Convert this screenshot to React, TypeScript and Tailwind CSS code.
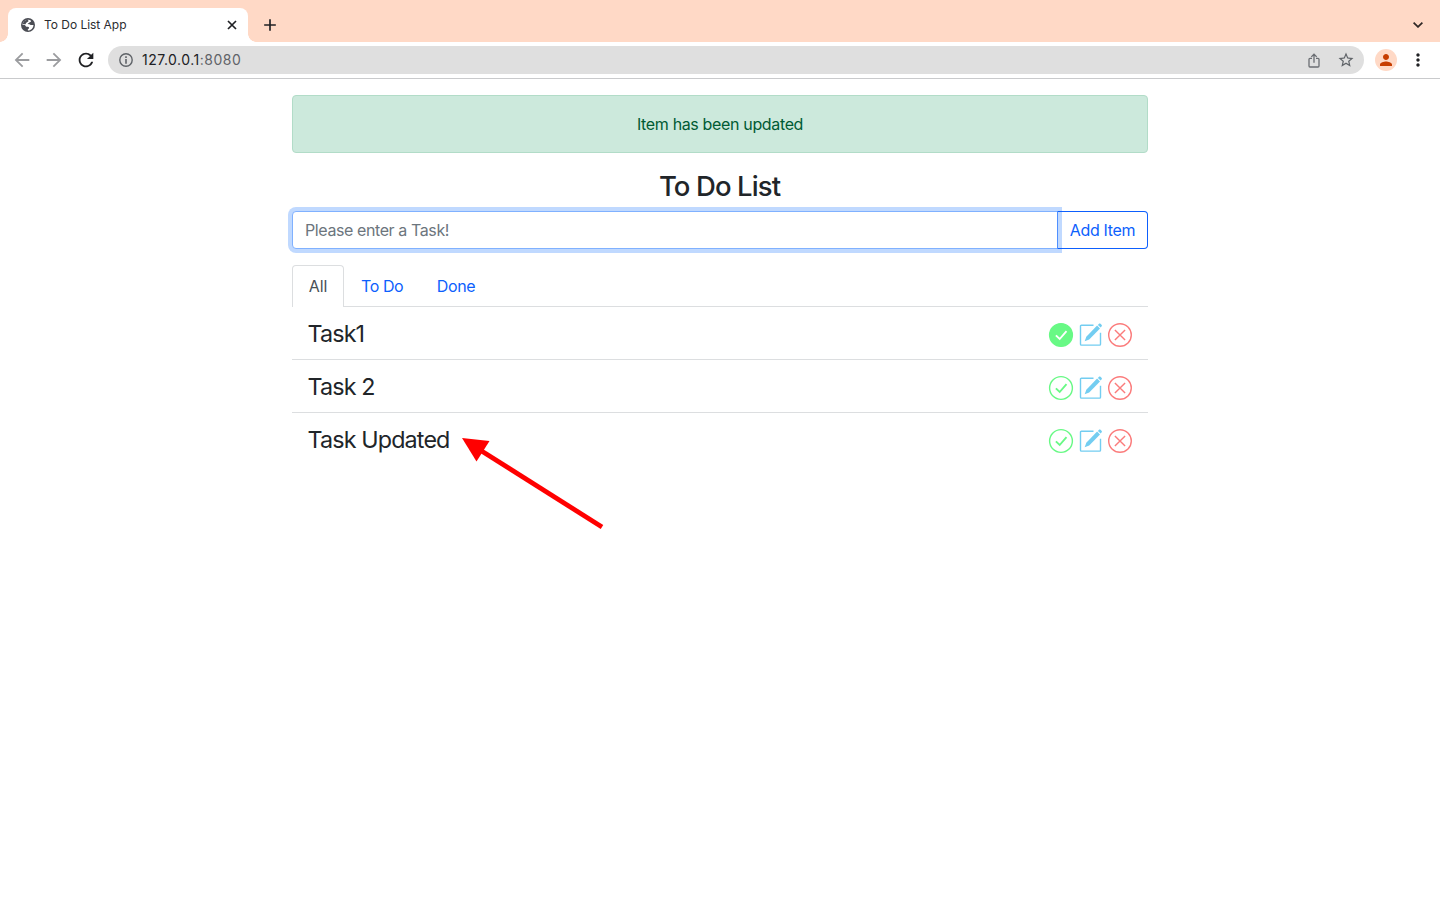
import { ReactNode } from "react";
import {
  MdAdd,
  MdArrowBack,
  MdArrowForward,
  MdRefresh,
  MdStarBorder,
  MdPerson,
  MdMoreVert,
} from "react-icons/md";

type Task = { title: string; done: boolean };

const tasks: Task[] = [
  { title: "Task1", done: true },
  { title: "Task 2", done: false },
  { title: "Task Updated", done: false },
];

function Globe() {
  return (
    <svg width="14" height="14" viewBox="0 0 14 14">
      <circle cx="7" cy="7" r="7" fill="#4b4d54" />
      <path
        d="M7.600 1.700 C9.300 1.900 10 2.500 10 3.200 C10 4.200 8.600 4 8.200 4.700 C8 5.300 7 5 6.700 5.600 C6.500 6.200 8.600 6.300 9.200 6.700 C9.900 7.300 12 6.800 12.500 6.900 C12.400 9.900 10 12.400 7.200 12.500 C6.500 12.300 6.600 11.300 7.200 10.900 C7.700 10.600 8.300 10.400 8 9.500 C7.600 8.600 6.400 9 5.600 8.700 C4.700 8.400 4.500 7.200 3.600 6.900 L1.500 6.900 C1.500 4.100 4 1.600 7.600 1.700 Z"
        fill="#fff"
      />
      <path d="M3 3.300 L6.800 1.300 L7.500 3.200 L5 5 L4.600 6.200 L1.400 6.300 Z" fill="#4b4d54" />
    </svg>
  );
}

function CheckIcon({ filled }: { filled: boolean }) {
  return (
    <svg width="30" height="30" viewBox="0 0 30 30" fill="none">
      <circle
        cx="15"
        cy="15"
        r="11.4"
        stroke="#68f985"
        strokeWidth="1.4"
        fill={filled ? "#68f985" : "none"}
      />
      <path d="M9.900 15.400 L13.700 19 L20.500 11.200" stroke={filled ? "#fff" : "#68f985"} strokeWidth="1.9" />
    </svg>
  );
}

function EditIcon() {
  return (
    <svg width="29" height="30" viewBox="0 0 29 30" fill="none">
      <path
        d="M17.500 5.200 H5.400 Q4.500 5.200 4.500 6.100 V24.200 Q4.500 25.100 5.400 25.100 H23.600 Q24.500 25.100 24.500 24.200 V12.700"
        stroke="#73cdf1"
        strokeWidth="1.4"
      />
      <path d="M8.700 21.200 L10.300 16.700 L21.100 5.600 L24 8.500 L13.200 19.500 Z" fill="#73cdf1" />
      <path d="M21.900 4.900 L23.200 3.600 Q23.900 3.100 24.600 3.800 L25.700 4.900 Q26.300 5.600 25.700 6.300 L24.600 7.600 Z" fill="#73cdf1" />
    </svg>
  );
}

function RemoveIcon() {
  return (
    <svg width="30" height="30" viewBox="0 0 30 30" fill="none" stroke="#fb7c7c" strokeWidth="1.4">
      <circle cx="15" cy="15" r="11.3" />
      <path d="M9.900 9.900 L20.100 20.100 M20.100 9.900 L9.900 20.100" />
    </svg>
  );
}

function TabStrip() {
  return (
    <div className="flex h-[42px] items-end bg-[#ffd9c6]">
      <div className="h-[8px] w-[8px] bg-[radial-gradient(circle_at_0_0,#ffd9c6_7.5px,#fff_8px)]" />
      <div className="flex h-[34px] w-[240px] items-center rounded-t-[8px] bg-white pl-[13px] pr-[11px]">
        <Globe />
        <span className="ml-[9px] flex-1 text-[12px] tracking-[-0.03px] text-[#2b2c30]">To Do List App</span>
        <svg width="10" height="10" viewBox="0 0 10 10" stroke="#202124" strokeWidth="1.7">
          <path d="M1 1 L9 9 M9 1 L1 9" />
        </svg>
      </div>
      <div className="h-[8px] w-[8px] bg-[radial-gradient(circle_at_100%_0,#ffd9c6_7.5px,#fff_8px)]" />
      <div className="ml-[4px] flex h-[34px] flex-1 items-center justify-between pr-[17px]">
        <MdAdd size={20} className="text-[#202124]" />
        <svg width="10" height="6" viewBox="0 0 10 6" fill="none" stroke="#2f2825" strokeWidth="1.7">
          <path d="M0.600 0.600 L5 4.900 L9.400 0.600" />
        </svg>
      </div>
    </div>
  );
}

function Toolbar() {
  return (
    <div className="flex h-[37px] items-center border-b border-[#c9cacc] bg-white pl-[11px]">
      <MdArrowBack size={22} className="text-[#9b9c9f]" />
      <MdArrowForward size={22} className="ml-[10px] text-[#9b9c9f]" />
      <MdRefresh size={22} className="ml-[10px] text-[#202124]" />
      <div className="ml-[11px] flex h-[28px] w-[1256px] items-center rounded-full bg-[#dfdfdf] pl-[11px] pr-[9px]">
        <svg width="14" height="14" viewBox="0 0 14 14" fill="none" stroke="#5f6368" strokeWidth="1.4">
          <circle cx="7" cy="7" r="6.2" />
          <path d="M7 3.300 V4.900 M7 6 V10.700" strokeWidth="1.6" />
        </svg>
        <span className="mb-px ml-[9px] flex-1 text-[14px] tracking-[0.5px] text-[#202124]">
          127.0.0.1<span className="text-[#5f6368]">:8080</span>
        </span>
        <svg width="12" height="15" viewBox="0 0 12 15" fill="none" stroke="#6b6e73" strokeWidth="1.3">
          <path d="M4 5.300 H2 Q1 5.300 1 6.300 V13 Q1 14 2 14 H10 Q11 14 11 13 V6.300 Q11 5.300 10 5.300 H8" />
          <path d="M6 9.800 V1.400 M3.300 3.900 L6 1.200 L8.700 3.900" />
        </svg>
        <MdStarBorder size={18} className="ml-[17px] text-[#5f6368]" />
      </div>
      <div className="ml-[11px] flex h-[22px] w-[22px] items-center justify-center rounded-full bg-[#ffd9c6]">
        <MdPerson size={18} className="text-[#c73d00]" />
      </div>
      <MdMoreVert size={20} className="ml-[11px] text-[#202124]" />
    </div>
  );
}

function Tab({ children }: { children: ReactNode }) {
  return (
    <button className="h-[41px] pl-[17px] pr-[16.5px] text-[16px] tracking-[-0.4px] text-[#0d5ffd]">
      {children}
    </button>
  );
}

function TaskRow({ task }: { task: Task }) {
  return (
    <li className="flex h-[53px] items-center justify-between border-b border-[#dcdee0] pl-[15.5px] pr-4 last:border-transparent">
      <span className="mt-[2px] text-[23.3px] tracking-[-0.85px] text-[#212529]">{task.title}</span>
      <span className="mr-[-3px] mt-[4px] flex">
        <CheckIcon filled={task.done} />
        <EditIcon />
        <RemoveIcon />
      </span>
    </li>
  );
}

function PointerArrow() {
  return (
    <svg className="pointer-events-none absolute left-[460px] top-[436px]" width="146" height="94" viewBox="460 436 146 94">
      <path d="M480 450 L602 527" stroke="#ff0000" strokeWidth="4.8" />
      <path d="M462 438 L489.500 441 L476.500 461.500 Z" fill="#ff0000" />
    </svg>
  );
}

export default function App() {
  return (
    <div className="relative h-[900px] w-[1440px] overflow-hidden bg-white font-['Inter',sans-serif]">
      <TabStrip />
      <Toolbar />
      <main className="mx-auto w-[856px] pt-4">
        <div className="flex h-[58px] items-center justify-center rounded-[4px] border border-[#b2dcc8] bg-[#cce9dc] text-[16px] tracking-[-0.35px] text-[#005b34]">
          Item has been updated
        </div>
        <h1 className="mt-4 flex h-[34px] items-center justify-center pr-px pt-px text-[27.5px] font-medium tracking-[-0.9px] text-[#212529]">
          To Do List
        </h1>
        <div className="mt-2 flex h-[38px]">
          <input
            className="relative z-10 w-[766px] rounded-l-[4px] border border-[#80b1ff] bg-white px-3 text-[16px] tracking-[-0.4px] shadow-[0_0_0_4px_#c0d9ff] outline-none placeholder:text-[#6c757d]"
            placeholder="Please enter a Task!"
          />
          <button className="relative z-20 -ml-px flex-1 rounded-r-[4px] border border-[#0d5ffd] border-l-[#4f90ff] text-[16px] tracking-[-0.35px] text-[#0d5ffd]">
            Add Item
          </button>
        </div>
        <nav className="mt-4 flex h-[42px] border-b border-[#dcdee0]">
          <button className="h-[42px] w-[52px] rounded-t-[4px] border border-b-0 border-[#dcdee0] bg-white pb-px text-[16px] tracking-[-0.1px] text-[#495057]">
            All
          </button>
          <Tab>To Do</Tab>
          <Tab>Done</Tab>
        </nav>
        <ul>
          {tasks.map((task) => (
            <TaskRow key={task.title} task={task} />
          ))}
        </ul>
      </main>
      <PointerArrow />
    </div>
  );
}
